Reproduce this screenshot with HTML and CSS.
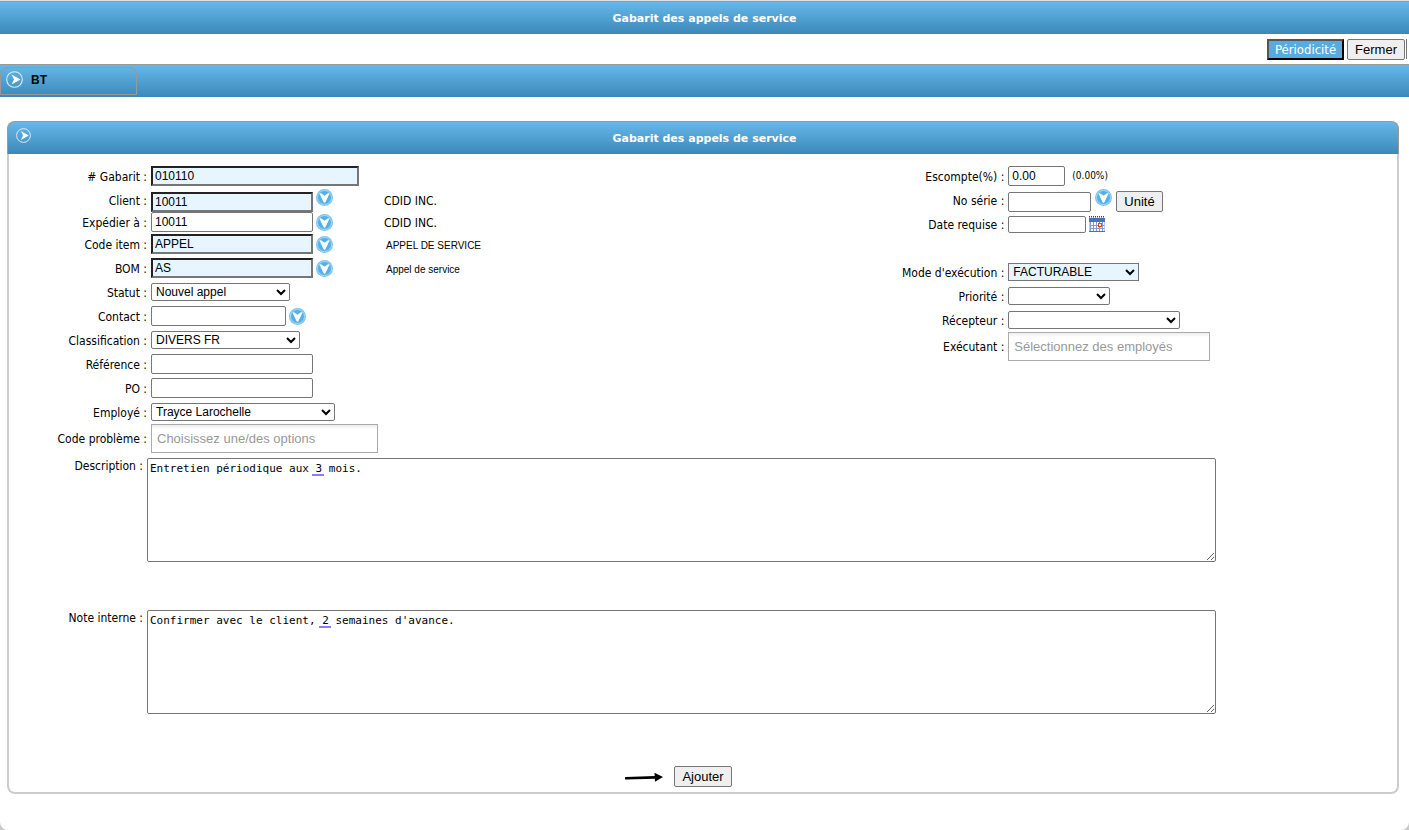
FILE: index.html
```html
<!DOCTYPE html>
<html lang="fr">
<head>
  <meta charset="utf-8">
  <title>Gabarit des appels de service</title>
  <link rel="stylesheet" href="styles.css">
</head>
<body>
  <!-- shared icons -->
  <svg class="sprite" aria-hidden="true">
    <symbol id="icon-next" viewBox="0 0 17 17">
      <circle cx="8.5" cy="8.5" r="7.8" fill="none" stroke="#fff" stroke-width="1.1" opacity=".8"/>
      <path d="M5.5 3.5 L14.5 8.5 L5.5 13.5 L8 8.5 Z" fill="#fff"/>
    </symbol>
    <symbol id="icon-lookup" viewBox="0 0 17 17">
      <circle cx="8.5" cy="8.5" r="8.5" fill="#7cc4ef"/>
      <circle cx="8.5" cy="8.5" r="7" fill="#52b1e8" stroke="#a5d8f5" stroke-width="1"/>
      <path d="M3.4 4.4 Q4.6 4 5.4 4.6 L8.5 6.8 L11.6 4.6 Q12.4 4 13.6 4.4 L9.4 13.2 Q8.5 14.4 7.6 13.2 Z" fill="#fff"/>
    </symbol>
  </svg>

  <div class="page">
    <h1 class="bar">Gabarit des appels de service</h1>

    <div class="toolbar">
      <button type="button" class="btn btn-period">Périodicité</button>
      <button type="button" class="btn">Fermer</button>
      <span class="toolbar-end"></span>
    </div>

    <div class="bar tabs">
      <a href="#bt" class="tab"><svg class="icon"><use href="#icon-next"/></svg>BT</a>
    </div>

    <form class="panel" id="bt">
      <div class="bar panel-head">
        <svg class="icon-small"><use href="#icon-next"/></svg>
        <h2>Gabarit des appels de service</h2>
      </div>

      <div class="columns">
        <div class="col">
          <div class="row">
            <label for="gabarit"># Gabarit :</label>
            <div class="field"><input type="text" id="gabarit" class="required w-208" value="010110"></div>
          </div>
          <div class="row">
            <label for="client">Client :</label>
            <div class="field lookup-row">
              <input type="text" id="client" class="required w-162" value="10011">
              <button type="button" class="lookup" aria-label="Chercher un client"><svg class="icon"><use href="#icon-lookup"/></svg></button>
            </div>
            <span class="info">CDID INC.</span>
          </div>
          <div class="row tight">
            <label for="expedier">Expédier à :</label>
            <div class="field">
              <input type="text" id="expedier" class="w-162" value="10011">
              <button type="button" class="lookup" aria-label="Chercher une adresse"><svg class="icon"><use href="#icon-lookup"/></svg></button>
            </div>
            <span class="info">CDID INC.</span>
          </div>
          <div class="row tight">
            <label for="item">Code item :</label>
            <div class="field">
              <input type="text" id="item" class="required w-162" value="APPEL">
              <button type="button" class="lookup" aria-label="Chercher un item"><svg class="icon"><use href="#icon-lookup"/></svg></button>
            </div>
            <span class="info info-small">APPEL DE SERVICE</span>
          </div>
          <div class="row">
            <label for="bom">BOM :</label>
            <div class="field">
              <input type="text" id="bom" class="required w-162" value="AS">
              <button type="button" class="lookup" aria-label="Chercher un BOM"><svg class="icon"><use href="#icon-lookup"/></svg></button>
            </div>
            <span class="info info-small">Appel de service</span>
          </div>
          <div class="row">
            <label for="statut">Statut :</label>
            <div class="field"><select id="statut" class="w-139"><option>Nouvel appel</option></select></div>
          </div>
          <div class="row">
            <label for="contact">Contact :</label>
            <div class="field">
              <input type="text" id="contact" class="w-135">
              <button type="button" class="lookup" aria-label="Chercher un contact"><svg class="icon"><use href="#icon-lookup"/></svg></button>
            </div>
          </div>
          <div class="row">
            <label for="classification">Classification :</label>
            <div class="field"><select id="classification" class="w-149"><option>DIVERS FR</option></select></div>
          </div>
          <div class="row">
            <label for="reference">Référence :</label>
            <div class="field"><input type="text" id="reference" class="w-162"></div>
          </div>
          <div class="row">
            <label for="po">PO :</label>
            <div class="field"><input type="text" id="po" class="w-162"></div>
          </div>
          <div class="row">
            <label for="employe">Employé :</label>
            <div class="field"><select id="employe" class="w-184"><option>Trayce Larochelle</option></select></div>
          </div>
          <div class="row row-multi">
            <label for="probleme">Code problème :</label>
            <div class="field"><input type="text" id="probleme" class="multi w-227" placeholder="Choisissez une/des options"></div>
          </div>
        </div>

        <div class="col col-right">
          <div class="row">
            <label for="escompte">Escompte(%) :</label>
            <div class="field"><input type="text" id="escompte" class="w-57" value="0.00"><span class="percent">(0.00%)</span></div>
          </div>
          <div class="row">
            <label for="serie">No série :</label>
            <div class="field lookup-row">
              <input type="text" id="serie" class="w-83">
              <button type="button" class="lookup" aria-label="Chercher un numéro de série"><svg class="icon"><use href="#icon-lookup"/></svg></button>
              <button type="button" class="btn">Unité</button>
            </div>
          </div>
          <div class="row">
            <label for="date">Date requise :</label>
            <div class="field">
              <input type="text" id="date" class="w-78 date">
              <button type="button" class="lookup" aria-label="Calendrier">
                <svg class="calendar" viewBox="0 0 16 16" shape-rendering="crispEdges">
                  <rect x="0" y="1" width="16" height="15" fill="#fff"/>
                  <rect x="0" y="2" width="16" height="4" fill="#4a70bb"/>
                  <path d="M0 .5H16" stroke="#444" stroke-dasharray="1 1"/>
                  <path d="M0 1.5H16" stroke="#999" stroke-dasharray="1 1"/>
                  <path d="M1.5 6V15M4.5 6V15M7.5 6V15M10.5 6V15M13.5 6V15M1 9.5H15M1 12.5H15" stroke="#7f9cd4"/>
                  <path d="M.5 6V16M15.5 6V16" stroke="#b8c8e8"/>
                  <path d="M0 15.5H16" stroke="#4a70bb"/>
                  <rect x="9.5" y="7.5" width="3" height="3" fill="#fff" stroke="#e8441c"/>
                </svg>
              </button>
            </div>
          </div>
          <div class="row"></div>
          <div class="row">
            <label for="mode">Mode d'exécution :</label>
            <div class="field"><select id="mode" class="w-131 select-required"><option>FACTURABLE</option></select></div>
          </div>
          <div class="row">
            <label for="priorite">Priorité :</label>
            <div class="field"><select id="priorite" class="w-102"><option></option></select></div>
          </div>
          <div class="row">
            <label for="recepteur">Récepteur :</label>
            <div class="field"><select id="recepteur" class="w-172"><option></option></select></div>
          </div>
          <div class="row row-multi">
            <label for="executant">Exécutant :</label>
            <div class="field"><input type="text" id="executant" class="multi w-202" placeholder="Sélectionnez des employés"></div>
          </div>
        </div>
      </div>

      <div class="note">
        <label for="description">Description :</label>
        <div class="note-box">
          <textarea id="description" spellcheck="false">Entretien périodique aux 3 mois.</textarea>
          <span class="mark mark-description"></span>
        </div>
      </div>
      <div class="note">
        <label for="interne">Note interne :</label>
        <div class="note-box">
          <textarea id="interne" spellcheck="false">Confirmer avec le client, 2 semaines d'avance.</textarea>
          <span class="mark mark-interne"></span>
        </div>
      </div>

      <div class="actions">
        <svg class="arrow" viewBox="0 0 38 10">
          <path d="M1 6.2 L30 5.4" stroke="#000" stroke-width="2.6" stroke-linecap="round"/>
          <path d="M29.5 .8 L38 5 L30 9.8 Z"/>
        </svg>
        <button type="submit" class="btn">Ajouter</button>
      </div>
    </form>
  </div>
</body>
</html>
```

FILE: styles.css
```css
* {
  box-sizing: border-box;
}

body {
  margin: 0;
  background: #c8c8c8;
  color: #000;
  font-family: "DejaVu Sans Condensed", "Noto Sans", sans-serif;
  font-size: 12px;
}

.sprite {
  display: none;
}

.page {
  min-height: 100vh;
  background: #fff;
  border-top: 1px solid #e0e0e0;
  border-radius: 0 0 8px 8px;
}

.bar {
  height: 33px;
  margin: 0;
  border-top: 1px solid #999;
  background: linear-gradient(#67b7e8, #3a89ba);
}

h1, h2 {
  margin: 0;
  color: #fff;
  font-family: "DejaVu Sans", sans-serif;
  font-size: 11px;
  font-weight: bold;
  line-height: 33px;
  text-align: center;
}

.toolbar {
  display: flex;
  justify-content: flex-end;
  align-items: center;
  gap: 3px;
  height: 30px;
}

.toolbar .btn {
  padding: 0 7px;
}

.toolbar-end {
  width: 1px;
  height: 20px;
  margin: 0 2px 0 -2px;
  background: #767676;
}

.btn {
  height: 21px;
  padding: 0 7px;
  border: 1px solid #767676;
  border-radius: 2px;
  background: #efefef;
  color: #000;
  font-family: "Liberation Sans", Arial, sans-serif;
  font-size: 13px;
  line-height: 19px;
}

.toolbar .btn-period {
  padding: 0 6px;
  border: 2px solid;
  border-color: #555 #000 #000 #555;
  border-radius: 0;
  background: #56ace0;
  color: #fff;
  font-family: "DejaVu Sans Condensed", sans-serif;
  line-height: 17px;
}

.tabs {
  padding-top: 2px;
}

.tab {
  display: flex;
  align-items: center;
  gap: 8px;
  width: 137px;
  height: 28px;
  padding: 0 5px 3px;
  border: 1px solid #999;
  border-radius: 8px 8px 0 0;
  color: #000;
  font-family: "Liberation Sans", Arial, sans-serif;
  font-weight: bold;
  text-decoration: none;
}

.icon {
  display: block;
  width: 17px;
  height: 17px;
}

.icon-small {
  float: left;
  width: 15px;
  height: 15px;
  margin: 6px 0 0 8px;
}

.panel {
  margin: 24px 10px 0 7px;
  border: 2px solid #ccc;
  border-top: none;
  border-radius: 8px;
}

.panel-head {
  margin: 0 -2px;
  border-right: 1px solid #999;
  border-left: 1px solid #999;
  border-radius: 8px 8px 0 0;
}

.panel-head h2 {
  padding: 0 20px;
}

/* form rows */
.columns {
  display: grid;
  grid-template-columns: 64% 1fr;
  padding-top: 10px;
}

.row {
  display: flex;
  align-items: center;
  gap: 4px;
  height: 24px;
}

.row label {
  flex: none;
  align-self: flex-end;
  width: 138px;
  text-align: right;
  line-height: 22px;
  white-space: nowrap;
}

.col-right .row label {
  width: 107px;
}

.field {
  display: flex;
  align-items: center;
  gap: 3px;
  min-width: 229px;
}

.tight {
  align-items: flex-start;
  height: 22px;
}

.lookup-row {
  height: 24px;
}

.lookup-row input,
.lookup-row .btn {
  align-self: flex-end;
}

.lookup-row .lookup {
  align-self: flex-start;
  padding-top: 1px;
}

.col-right .lookup-row {
  gap: 4px;
}

.row-multi {
  height: 29px;
}

.row-multi label {
  line-height: 28px;
}

.info {
  align-self: flex-end;
  line-height: 22px;
}

.info-small {
  padding: 2px 0 0 2px;
  font-family: "Liberation Sans", Arial, sans-serif;
  font-size: 10px;
  line-height: 20px;
}

.percent {
  padding: 0 0 2px 4px;
  font-size: 10px;
}

input, select {
  margin: 0;
  font-family: "Liberation Sans", Arial, sans-serif;
  font-size: 12px;
}

input {
  height: 20px;
  padding: 0 3px;
  border: 1px solid #767676;
  border-radius: 2px;
  background: #fff;
}

input.required {
  padding: 0 2px;
  border: 2px solid;
  border-color: #222 #767676 #767676 #222;
  border-radius: 0;
  background: #e6f5ff;
}

input.date {
  height: 17px;
}

input.multi {
  height: 29px;
  padding: 0 5px;
  border: 1px solid #aaa;
  border-radius: 0;
  background: linear-gradient(#eee 1%, #fff 15%);
  font-size: 13px;
}

input.multi::placeholder {
  color: #999;
}

select {
  height: 18px;
  padding: 0;
  border: 1px solid #767676;
  border-radius: 2px;
  background-color: #fff;
}

select.select-required {
  border-radius: 0;
  background-color: #e6f5ff;
}

.lookup {
  padding: 0;
  border: none;
  background: none;
}

.calendar {
  display: block;
  width: 16px;
  height: 16px;
}

.w-57 { width: 57px; }
.w-78 { width: 78px; }
.w-83 { width: 83px; }
.w-102 { width: 102px; }
.w-131 { width: 131px; }
.w-135 { width: 135px; }
.w-139 { width: 139px; }
.w-149 { width: 149px; }
.w-162 { width: 162px; }
.w-172 { width: 172px; }
.w-184 { width: 184px; }
.w-202 { width: 202px; }
.w-208 { width: 208px; }
.w-227 { width: 227px; }

/* text areas */
.note {
  display: flex;
  gap: 4px;
  margin-bottom: 48px;
}

.columns + .note {
  margin-top: 5px;
}

.note label {
  flex: none;
  width: 134px;
  text-align: right;
  line-height: 16px;
}

.note-box {
  position: relative;
  width: 77%;
}

textarea {
  display: block;
  width: 100%;
  height: 104px;
  padding: 3px 2px;
  border: 1px solid #767676;
  border-radius: 2px;
  font-family: "DejaVu Sans Mono", monospace;
  font-size: 11px;
}

/* grammar underline over the text */
.mark {
  position: absolute;
  top: 16px;
  width: 12px;
  height: 2px;
  background: #8b7cf8;
}

.mark-description {
  left: 165px;
}

.mark-interne {
  left: 172px;
}

.actions {
  display: grid;
  grid-template-columns: 1fr auto 1fr;
  align-items: center;
  gap: 11px;
  margin-top: 52px;
  padding-bottom: 5px;
}

.arrow {
  justify-self: end;
  width: 38px;
  height: 10px;
}
```
